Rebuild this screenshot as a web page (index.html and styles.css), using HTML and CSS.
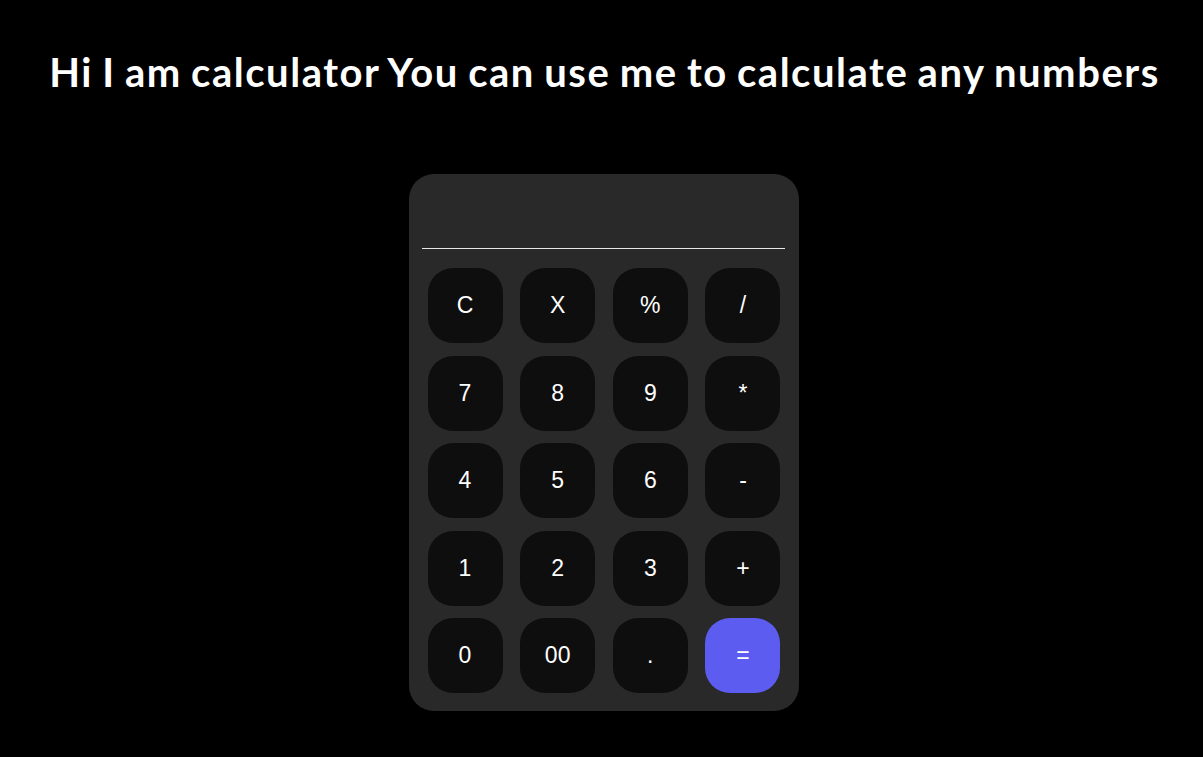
FILE: index.html
```html
<!DOCTYPE html>
<html>
<head>
<meta charset="utf-8">
<link rel="stylesheet" href="styles.css">
</head>
<body>
<h1 class="title">Hi I am calculator You can use me to calculate any numbers</h1>
<div class="calc">
  <div class="display"></div>
  <div class="keys">
    <button class="key">C</button>
    <button class="key">X</button>
    <button class="key">%</button>
    <button class="key">/</button>
    <button class="key">7</button>
    <button class="key">8</button>
    <button class="key">9</button>
    <button class="key">*</button>
    <button class="key">4</button>
    <button class="key">5</button>
    <button class="key">6</button>
    <button class="key">-</button>
    <button class="key">1</button>
    <button class="key">2</button>
    <button class="key">3</button>
    <button class="key">+</button>
    <button class="key">0</button>
    <button class="key">00</button>
    <button class="key">.</button>
    <button class="key key-eq">=</button>
  </div>
</div>
</body>
</html>
```
FILE: styles.css
```css
html, body {
  margin: 0;
  padding: 0;
  background: #000;
}
body {
  font-family: "Liberation Sans", Arial, sans-serif;
  color: #fff;
}
.title {
  margin: 0;
  padding: 48px 0 0 6px;
  text-align: center;
  font-family: Lato, "Open Sans", sans-serif;
  font-weight: 700;
  font-size: 40px;
  line-height: 48px;
  letter-spacing: 1.55px;
  word-spacing: -2px;
  color: #fff;
}
.calc {
  box-sizing: border-box;
  width: 390px;
  height: 537px;
  margin: 78px auto 0;
  position: relative;
  left: 2px;
  background: #292929;
  border-radius: 25px;
  padding: 0 18px 18px 19px;
}
.display {
  height: 74px;
  margin: 0 -4px 19px -6px;
  border-bottom: 1px solid #e6e6e6;
}
.keys {
  display: grid;
  grid-template-columns: repeat(4, 75px);
  grid-auto-rows: 75px;
  justify-content: space-between;
  row-gap: 12.5px;
}
.key {
  border: none;
  margin: 0;
  padding: 0;
  background: #0f0e0e;
  border-radius: 25px;
  color: #fff;
  font-family: "Liberation Sans", Arial, sans-serif;
  font-size: 23px;
}
.key-eq {
  background: #5c5cf0;
}
```
